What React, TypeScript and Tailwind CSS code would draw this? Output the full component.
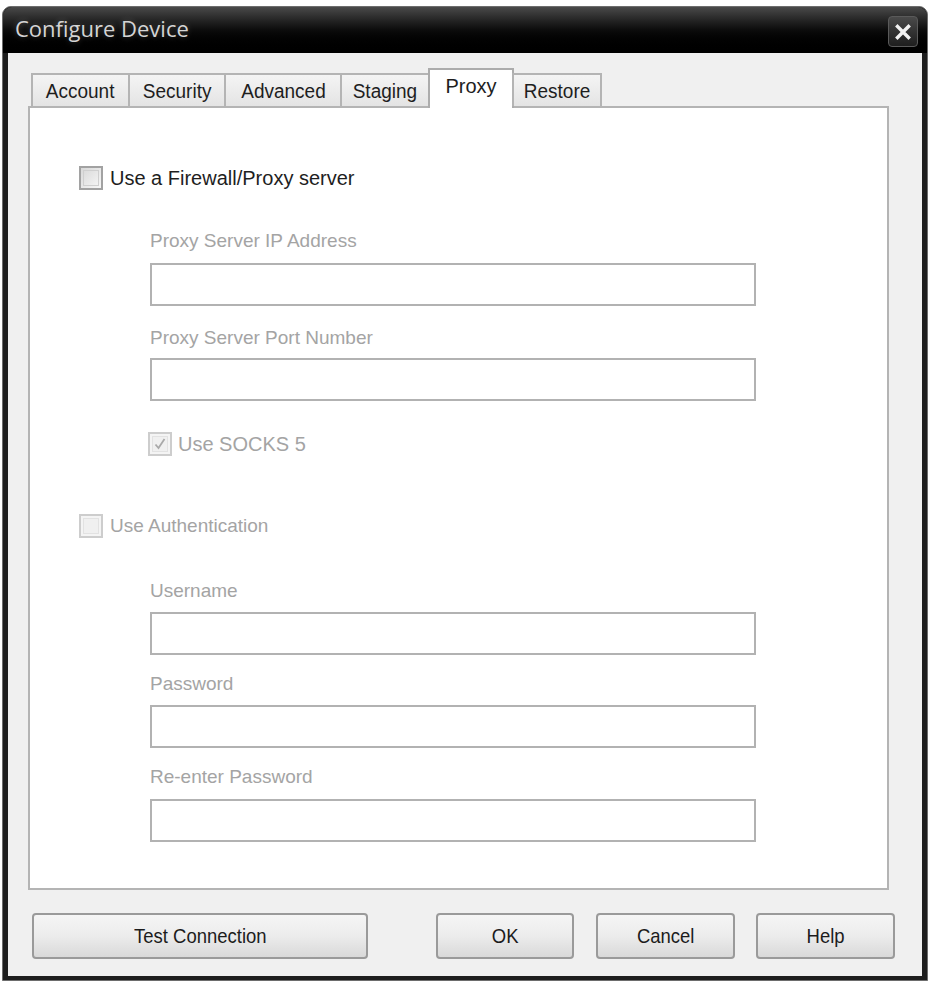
import React from "react";

const tabs = [
  { name: "Account", w: "w-[99px]" },
  { name: "Security", w: "w-[98px]" },
  { name: "Advanced", w: "w-[118px]" },
  { name: "Staging", w: "w-[90px]" },
  { name: "Proxy", w: "w-[86px]", active: true },
  { name: "Restore", w: "w-[90px]" },
];

function Check({ disabled, checked }: { disabled?: boolean; checked?: boolean }) {
  return (
    <div
      className={`w-[24px] h-[24px] border-2 flex items-center justify-center ${
        disabled ? "border-[#cdcdcd] bg-[#f4f4f4]" : "border-[#a2a2a2] bg-gradient-to-br from-[#d9d9d9] to-[#f7f7f7]"
      }`}
    >
      <div
        className={`w-[16px] h-[16px] border flex items-center justify-center ${
          disabled ? "border-[#e2e2e2] bg-[#f0f0f0]" : "border-[#cfcfcf] bg-gradient-to-br from-[#dcdcdc] to-[#f3f3f3]"
        }`}
      >
        {checked && (
          <svg width="14" height="14" viewBox="0 0 14 14">
            <path d="M2.5 7.5 L5.5 11 L11.5 2" fill="none" stroke="#a9a9a9" strokeWidth="1.8" />
          </svg>
        )}
      </div>
    </div>
  );
}

function Field({ mt }: { mt: string }) {
  return <div className={`${mt} ml-[120px] w-[606px] h-[43px] border-2 border-[#b2b2b2] bg-white`} />;
}

function Label({ text, mt }: { text: string; mt: string }) {
  return <div className={`${mt} ml-[120px] h-[24px] leading-[24px] text-[19px] text-[#a4a4a4]`}>{text}</div>;
}

function Btn({ text, w }: { text: string; w: string }) {
  return (
    <div
      className={`${w} h-[46px] rounded-[4px] border-2 border-[#9a9a9a] bg-gradient-to-b from-[#f5f5f5] via-[#ececec] to-[#d9d9d9] flex items-center justify-center text-[#1c1c1c]`}
    >
      <span className="inline-block text-[21px] scale-x-[0.88]">{text}</span>
    </div>
  );
}

export default function App() {
  return (
    <div className="w-[931px] h-[982px] bg-white overflow-hidden pt-[6px] pl-[2px]" style={{ fontFamily: '"Liberation Sans", Arial, sans-serif' }}>
      <div className="w-[926px] h-[975px] rounded-t-[9px] bg-[#1e1e1e] border border-[#6d6d6d] flex flex-col">
        {/* Title bar */}
        <div className="h-[46px] flex items-center justify-between pl-[12px] pr-[9px] rounded-t-[9px] bg-gradient-to-b from-[#4a4a4a] via-[#0c0c0c] to-[#000000]">
          <span
            className="text-[22px] text-[#d4d4d4] -mt-[4px]"
            style={{ fontFamily: '"Open Sans", "Noto Sans", sans-serif', textShadow: "0 0 6px rgba(255,255,255,0.25)" }}
          >
            Configure Device
          </span>
          <div className="w-[30px] h-[31px] mt-[3px] rounded-[4px] border border-[#5a5a5a] bg-gradient-to-b from-[#4a4a4a] to-[#1e1e1e] flex items-center justify-center">
            <svg width="16" height="16" viewBox="0 0 16 16">
              <path d="M2.5 2.5 L13.5 13.5 M13.5 2.5 L2.5 13.5" stroke="#f2f2f2" strokeWidth="3.4" strokeLinecap="square" />
            </svg>
          </div>
        </div>
        {/* Body */}
        <div className="mx-[5px] h-[923px] bg-[#f0f0f0] pt-[15px] pl-[20px]">
          {/* Tabs */}
          <div className="flex items-end h-[38px] pl-[3px] relative z-10">
            {tabs.map((t, i) =>
              t.active ? (
                <div
                  key={t.name}
                  className={`${t.w} h-[40px] -mb-[2px] ${i > 0 ? "-ml-[2px]" : ""} border-2 border-b-0 border-[#acacac] bg-white flex items-center justify-center pb-[6px] text-[20px] text-[#1e1e1e]`}
                >
                  {t.name}
                </div>
              ) : (
                <div
                  key={t.name}
                  className={`${t.w} h-[33px] ${i > 0 ? "-ml-[2px]" : ""} border-2 border-b-0 border-[#b4b4b4] bg-gradient-to-b from-[#f4f4f4] to-[#e4e4e4] flex items-center justify-center text-[20px] text-[#1e1e1e]`}
                >
                  <span className="inline-block scale-x-[0.95]">{t.name}</span>
                </div>
              )
            )}
          </div>
          {/* Panel */}
          <div className="w-[861px] h-[784px] border-2 border-[#b4b4b4] bg-white flex flex-col">
            <div className="mt-[58px] ml-[49px] flex items-center gap-[7px] h-[24px]">
              <Check />
              <span className="text-[20px] text-[#1e1e1e] leading-[24px]">Use a Firewall/Proxy server</span>
            </div>
            <Label text="Proxy Server IP Address" mt="mt-[39px]" />
            <Field mt="mt-[10px]" />
            <Label text="Proxy Server Port Number" mt="mt-[20px]" />
            <Field mt="mt-[8px]" />
            <div className="mt-[31px] ml-[118px] flex items-center gap-[6px] h-[24px]">
              <Check disabled checked />
              <span className="text-[20px] text-[#a4a4a4] leading-[24px]">Use SOCKS 5</span>
            </div>
            <div className="mt-[58px] ml-[49px] flex items-center gap-[7px] h-[24px]">
              <Check disabled />
              <span className="text-[19px] text-[#a4a4a4] leading-[24px]">Use Authentication</span>
            </div>
            <Label text="Username" mt="mt-[41px]" />
            <Field mt="mt-[9px]" />
            <Label text="Password" mt="mt-[17px]" />
            <Field mt="mt-[9px]" />
            <Label text="Re-enter Password" mt="mt-[17px]" />
            <Field mt="mt-[10px]" />
          </div>
          {/* Buttons */}
          <div className="mt-[23px] ml-[4px] flex items-center">
            <Btn text="Test Connection" w="w-[336px]" />
            <div className="ml-[68px]">
              <Btn text="OK" w="w-[138px]" />
            </div>
            <div className="ml-[22px]">
              <Btn text="Cancel" w="w-[139px]" />
            </div>
            <div className="ml-[21px]">
              <Btn text="Help" w="w-[139px]" />
            </div>
          </div>
        </div>
      </div>
    </div>
  );
}
